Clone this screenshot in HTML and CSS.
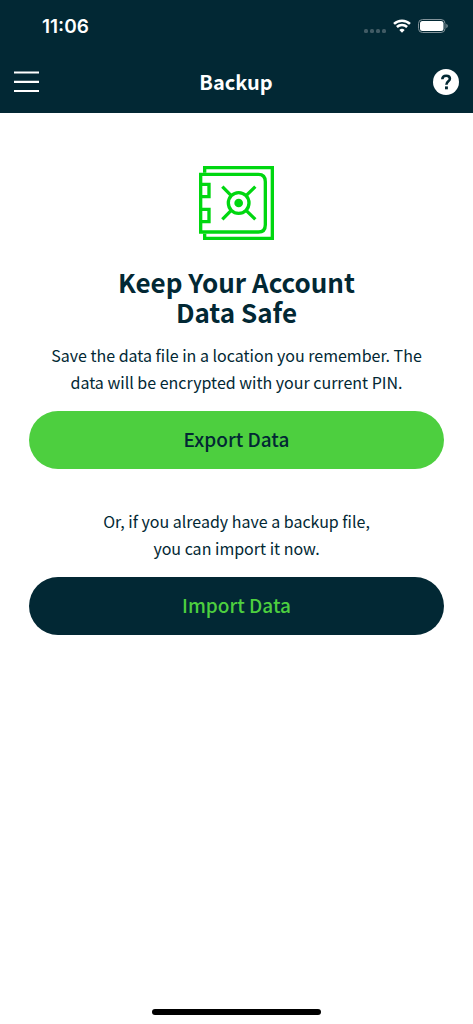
FILE: index.html
```
<!DOCTYPE html>
<html lang="en">
<head>
  <meta charset="UTF-8" />
  <meta name="viewport" content="width=device-width, initial-scale=1.0" />
  <title>Backup</title>
  <link rel="stylesheet" href="styles.css">
</head>
<body>
  <!-- Header -->
  <header>
    <div class="status-bar">
      <span class="time">11:06</span>
      <div class="status-icons">
        <svg class="signal" width="22" height="4" viewBox="0 0 22 4" fill="#415b65">
          <rect x="0" y="0" width="4" height="4" rx="1.5" />
          <rect x="6" y="0" width="4" height="4" rx="1.5" />
          <rect x="12" y="0" width="4" height="4" rx="1.5" />
          <rect x="18" y="0" width="4" height="4" rx="1.5" />
        </svg>
        <svg width="18" height="14" viewBox="0 0 18 14" fill="none" stroke="#fff" stroke-width="2.5">
          <path d="M1 4.9 A11.5 11.5 0 0 1 17 4.9" />
          <path d="M3.9 8 A7.3 7.3 0 0 1 14.1 8" />
          <path d="M9 13.7 L6.3 10.9 A4 4 0 0 1 11.7 10.9 Z" fill="#fff" stroke="none" />
        </svg>
        <svg width="30" height="14" viewBox="0 0 30 14">
          <rect x="0.5" y="0.5" width="26.5" height="13" rx="4" fill="none" stroke="#82939a" />
          <rect x="2" y="2" width="23.5" height="10" rx="2.5" fill="#fff" />
          <path d="M28.3 4.8 Q29.8 5.5 29.8 7 Q29.8 8.5 28.3 9.2 Z" fill="#82939a" />
        </svg>
      </div>
    </div>
    <nav class="nav-bar">
      <button class="icon-btn" type="button" aria-label="Menu">
        <svg width="25" height="22" viewBox="0 0 25 22" stroke="#fff" stroke-width="2.2">
          <path d="M0 1.5 H25 M0 10.8 H25 M0 20 H25" />
        </svg>
      </button>
      <h1>Backup</h1>
      <button class="icon-btn" type="button" aria-label="Help">
        <svg width="26" height="26" viewBox="0 0 26 26">
          <circle cx="13" cy="13" r="13" fill="#fff" />
          <path d="M9.3 10.2 C9.4 7.8 11 6.7 13.2 6.7 C15.4 6.7 16.9 8 16.9 9.8 C16.9 12.5 13.4 12.2 13.4 15.8" fill="none" stroke="#022834" stroke-width="2.6" />
          <rect x="12" y="17.4" width="2.9" height="2.9" fill="#022834" />
        </svg>
      </button>
    </nav>
  </header>

  <!-- Backup actions -->
  <main>
    <svg width="75" height="74" viewBox="39 32 225 222" fill="none" stroke="#00d710" stroke-width="10">
      <path d="M56 52 V37 H259 V249 H56 V235" />
      <path d="M44 57 H217 Q238 57 238 79 V208 Q238 230 217 230 H44 Z" />
      <path d="M44 87 H69 V124 H44 M44 162 H69 V199 H44" />
      <circle cx="158" cy="143" r="31" />
      <circle cx="158" cy="143" r="13" fill="#00d710" stroke="none" />
      <path d="M109 94 L135 120 M208 94 L181 120 M109 192 L135 166 M208 192 L181 166" />
    </svg>
    <h2>Keep Your Account<br>Data Safe</h2>
    <p>Save the data file in a location you remember. The data will be encrypted with your current PIN.</p>
    <button class="btn btn-export" type="button">Export Data</button>
    <p class="import-text">Or, if you already have a backup file,<br>you can import it now.</p>
    <button class="btn btn-import" type="button">Import Data</button>
  </main>

  <div class="home-indicator"></div>
</body>
</html>
```
FILE: styles.css
```
* {
  box-sizing: border-box;
}
body {
  margin: 0;
  min-height: 100vh;
  display: flex;
  flex-direction: column;
  font-family: "Noto Sans CJK SC", sans-serif;
  background-color: #fff;
  color: #022834;
}
header {
  background: #022834;
  color: #fff;
}
.status-bar {
  display: flex;
  justify-content: space-between;
  align-items: center;
  height: 52px;
  padding: 0 25px 0 42px;
}
.time {
  font-family: Inter, sans-serif;
  font-size: 19px;
  font-weight: 600;
}
.status-icons {
  display: flex;
  align-items: center;
  gap: 7px;
}
.signal {
  margin-top: 9px;
}
.nav-bar {
  display: flex;
  justify-content: space-between;
  align-items: center;
  height: 61px;
  padding: 0 14px 2px;
}
.icon-btn {
  display: flex;
  padding: 0;
  border: none;
  background: none;
  cursor: pointer;
}
h1 {
  margin: 0;
  font-size: 20px;
  line-height: 30px;
  font-weight: 700;
}
main {
  flex: 1;
  display: flex;
  flex-direction: column;
  align-items: center;
  padding: 53px 29px 0;
  text-align: center;
}
h2 {
  margin: 27px 0 15px;
  font-size: 26px;
  line-height: 30px;
  font-weight: 700;
}
p {
  max-width: 390px;
  margin: 0 0 15px;
  font-size: 16px;
  line-height: 27px;
}
.btn {
  width: 100%;
  height: 58px;
  padding: 0 0 3px;
  border: none;
  border-radius: 29px;
  font-family: inherit;
  font-size: 19px;
  font-weight: 500;
  cursor: pointer;
}
.btn-export {
  background: #4dcf3f;
  color: #022834;
}
.import-text {
  margin-top: 39px;
}
.btn-import {
  background: #022834;
  color: #4dcf3f;
}
.home-indicator {
  width: 169px;
  height: 6px;
  margin: 0 auto 9px;
  border-radius: 3px;
  background: #000;
}
```
